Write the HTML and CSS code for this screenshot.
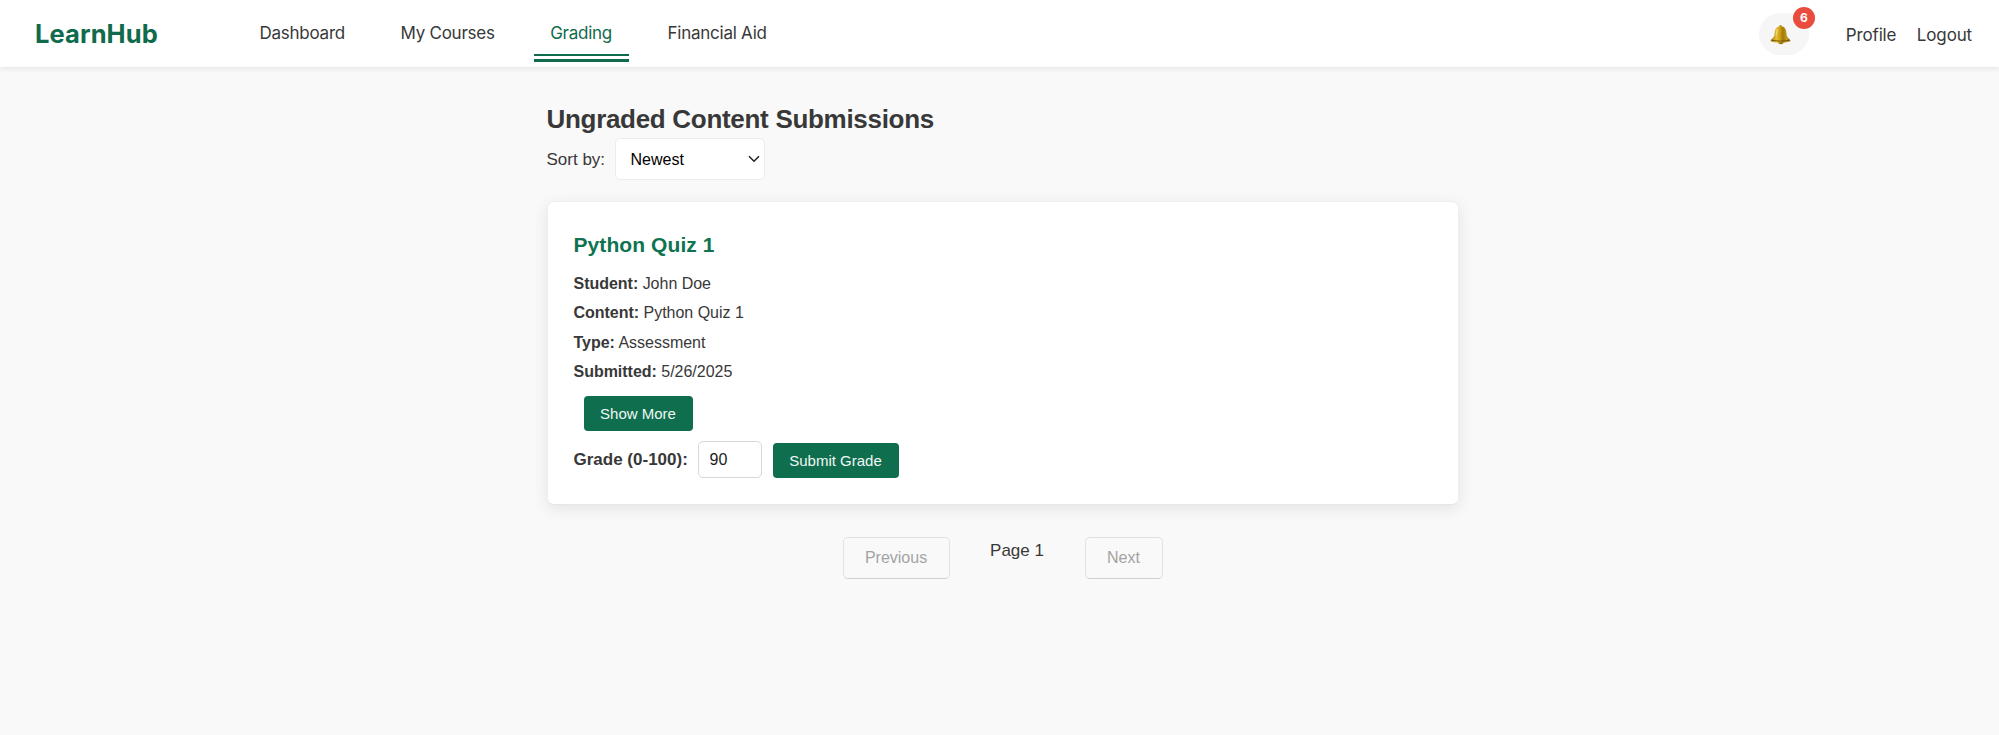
FILE: index.html
```html
<!DOCTYPE html>
<html lang="en">
<head>
<meta charset="utf-8">
<title>LearnHub</title>
<link rel="stylesheet" href="styles.css">
</head>
<body>
<header class="navbar">
  <a class="brand">LearnHub</a>
  <nav class="links">
    <a class="link dashboard">Dashboard</a>
    <a class="link courses">My Courses</a>
    <a class="link grading active">Grading</a>
    <a class="link aid">Financial Aid</a>
  </nav>
  <div class="account">
    <div class="bell">
      <svg class="bell-icon" viewBox="0 0 22 22">
        <defs>
          <linearGradient id="gold" x1="0" x2="1" y1="0" y2="0">
            <stop offset="0" stop-color="#93700f"/>
            <stop offset=".28" stop-color="#e5bd3a"/>
            <stop offset=".42" stop-color="#d9ac1c"/>
            <stop offset=".62" stop-color="#a17b0b"/>
            <stop offset=".82" stop-color="#c59a1d"/>
            <stop offset="1" stop-color="#80600c"/>
          </linearGradient>
        </defs>
        <ellipse cx="11.4" cy="19.3" rx="2.8" ry="1.8" fill="#9a6c17"/>
        <path d="M9.6 2.4Q9.7 1 11 1t1.5 1.4C16 3.3 17 6 17.2 9.500c.2 3.500 1.200 5 3.500 6.700q.8.8.4 1.800Q16 19.700 11 19.700T.9 18q-.4-1 .4-1.800C3.600 14.500 4.700 13 4.900 9.500 5.100 6 6.200 3.300 9.600 2.400Z" fill="url(#gold)"/>
        <path d="M1.600 17.100q9.400 1.800 18.900 0" fill="none" stroke="#725109" stroke-width=".9"/>
        <path d="M7.700 5.500Q6.900 8 6.700 12" fill="none" stroke="#f6db77" stroke-width="1.100"/>
      </svg>
      <span class="badge">6</span>
    </div>
    <a class="profile">Profile</a>
    <a class="logout">Logout</a>
  </div>
</header>
<main class="content">
  <h1 class="title">Ungraded Content Submissions</h1>
  <div class="sort">
    <label class="sort-label">Sort by:</label>
    <div class="select"><span class="value">Newest</span>
      <svg class="chevron" viewBox="0 0 12 8"><path d="M1 1.200 6 6.200 11 1.200" fill="none" stroke="#222" stroke-width="1.500"/></svg>
    </div>
  </div>
  <section class="card">
    <h2 class="card-title">Python Quiz 1</h2>
    <p class="row student"><b>Student:</b> John Doe</p>
    <p class="row"><b>Content:</b> Python Quiz 1</p>
    <p class="row"><b>Type:</b> Assessment</p>
    <p class="row"><b>Submitted:</b> 5/26/2025</p>
    <button class="btn more">Show More</button>
    <div class="grade">
      <label class="grade-label">Grade (0-100):</label>
      <input class="grade-input" type="text" value="90">
      <button class="btn submit">Submit Grade</button>
    </div>
  </section>
  <div class="pager">
    <button class="page-btn prev" disabled>Previous</button>
    <span class="page">Page 1</span>
    <button class="page-btn next" disabled>Next</button>
  </div>
</main>
</body>
</html>
```
FILE: styles.css
```css
* { box-sizing: border-box; }
body {
  margin: 0;
  min-height: 735px;
  background: #f9f9f9;
  color: #383838;
  font-family: "Liberation Sans", Arial, sans-serif;
}
.navbar {
  display: flex;
  height: 67px;
  padding: 0 27px 0 35px;
  background: #fff;
  box-shadow: 0 2px 5px rgba(0, 0, 0, .08);
  font-family: Inter, sans-serif;
  white-space: nowrap;
}
.brand {
  width: 208px;
  font-size: 25.5px;
  font-weight: 700;
  letter-spacing: .1px;
  line-height: 68px;
  color: #0f6b4b;
}
.links { display: flex; gap: 22.5px; }
.link {
  height: 56px;
  padding: 0 16.5px;
  font-size: 17px;
  letter-spacing: -.25px;
  line-height: 67px;
}
.link.active {
  position: relative;
  color: #0f6b4b;
  border-bottom: 2px solid #0f6b4b;
}
.link.active::after {
  content: "";
  position: absolute;
  left: 0;
  right: 0;
  top: 59px;
  height: 3px;
  background: #0f6b4b;
}
.account {
  display: flex;
  align-items: flex-start;
  margin-left: auto;
  font-size: 17px;
  letter-spacing: -.15px;
  line-height: 70px;
}
.bell {
  position: relative;
  width: 50px;
  height: 42px;
  margin: 13px 37px 0 0;
  padding: 11px 0 0 11px;
  border-radius: 21px;
  background: #f6f6f6;
  line-height: 0;
}
.bell-icon { width: 21px; height: 21px; }
.badge {
  position: absolute;
  left: 34px;
  top: -6px;
  width: 22px;
  height: 22px;
  border-radius: 50%;
  background: #e94b3c;
  color: #fff;
  font-size: 12px;
  font-weight: 700;
  line-height: 22px;
  text-align: center;
}
.profile { margin-right: 20.5px; }
.content {
  width: 912px;
  margin: 0 auto;
  padding: 34px 0 0;
  position: relative;
  left: 3px;
}
.title {
  margin: 0 0 1px;
  font-size: 26px;
  letter-spacing: -.3px;
  line-height: 36px;
}
.sort { display: flex; font-size: 17px; line-height: 43px; }
.sort-label { width: 68px; height: 42px; }
.select {
  display: flex;
  align-items: center;
  justify-content: space-between;
  width: 150px;
  height: 42px;
  padding: 0 4px 0 15px;
  border: 1px solid #ececec;
  border-radius: 5px;
  background: #fff;
  color: #000;
  font-size: 16px;
}
.chevron { width: 12px; height: 8px; }
.card {
  height: 304px;
  margin-top: 21px;
  padding: 27px 27px 0 26px;
  border: 1px solid #efefef;
  border-bottom-color: #e6e6e6;
  border-radius: 7px;
  background: #fff;
  box-shadow: 0 4px 16px rgba(0, 0, 0, .09);
}
.card-title {
  margin: 0 0 8px;
  font-size: 21px;
  letter-spacing: .08px;
  line-height: 32px;
  color: #0f7350;
}
.row {
  margin: 0;
  font-size: 16px;
  letter-spacing: -.02px;
  line-height: 29.3px;
}
.btn {
  display: block;
  height: 35px;
  padding: 0;
  border: 0;
  border-radius: 4px;
  background: #0e6e4e;
  color: #f1f7f4;
  font-family: inherit;
  font-size: 15px;
}
.more { width: 109px; margin: 10px 0 0 10px; }
.grade { display: flex; margin-top: 10px; }
.grade-label {
  width: 124px;
  font-size: 17px;
  font-weight: 700;
  line-height: 37px;
}
.grade-input {
  width: 64px;
  height: 37px;
  padding: 0 11px;
  border: 1px solid #d8d8d8;
  border-radius: 5px;
  color: #222;
  font-family: inherit;
  font-size: 16px;
}
.submit { width: 126px; margin: 2px 0 0 11px; }
.pager { display: flex; margin: 32px 0 0 296px; }
.page-btn {
  height: 42px;
  padding: 0;
  border: 1px solid #e2e2e2;
  border-bottom-color: #cfcfcf;
  border-radius: 5px;
  background: #f9f9f9;
  color: #a3a3a3;
  font-family: inherit;
  font-size: 16px;
}
.prev { width: 107px; }
.next { width: 78px; }
.page {
  width: 135px;
  font-size: 17px;
  line-height: 27px;
  text-align: center;
}
```
